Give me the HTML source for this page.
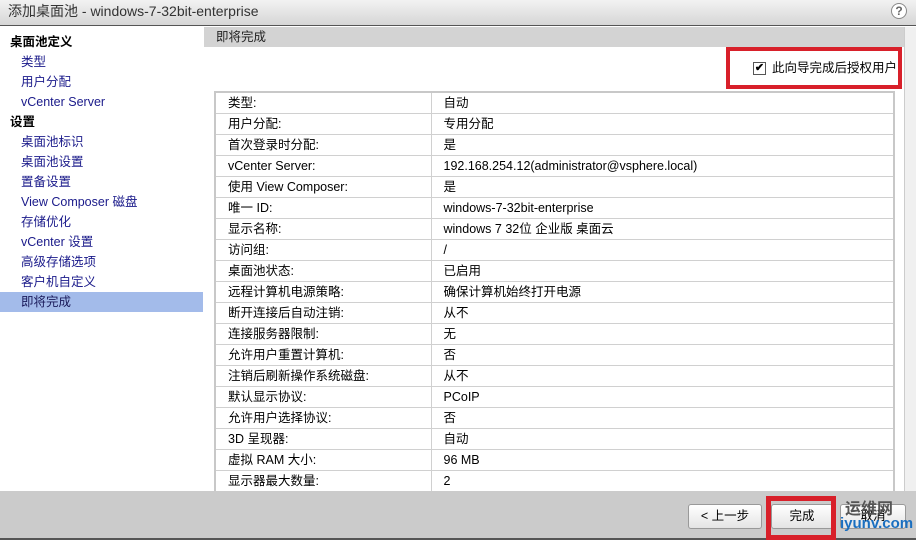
<!DOCTYPE html>
<html><head><meta charset="utf-8"><style>
*{margin:0;padding:0;box-sizing:border-box}
body{width:916px;height:540px;overflow:hidden;background:#fff;font-family:"Liberation Sans","Noto Sans CJK SC",sans-serif;font-size:12.5px;color:#000;position:relative}
.title{position:absolute;left:0;top:0;width:916px;height:26px;background:linear-gradient(#f2f2f2,#d6d6d6);border-bottom:1px solid #555;font-size:14px;line-height:18px;color:#333;padding:2px 0 0 8px}
.help{position:absolute;right:9px;top:3px;width:16px;height:16px;border-radius:50%;border:1px solid #888;background:#fff;font-size:12px;text-align:center;line-height:14px;color:#666;font-weight:bold}
.side{position:absolute;left:0;top:27px;width:204px;height:464px;background:#fff}
.side div{position:absolute;left:21px;color:#1a1a8a;font-size:12.5px;line-height:16px}
.side .h{left:10px;color:#000;font-weight:bold}
.sel{position:absolute;left:0;top:292px;width:203px;height:20px;background:#a3bbea}
.hdr{position:absolute;left:204px;top:27px;width:700px;height:20px;background:#d3d3d3;padding:2px 0 0 12px;color:#222;line-height:16px}
.chk{position:absolute;left:726px;top:47px;width:176px;height:42px;border:4px solid #d8202a;background:#fff}
.box{position:absolute;left:23px;top:11px;width:13px;height:13px;border:1px solid #555;background:#fff;font-size:11px;line-height:11px;text-align:center;font-weight:bold}
.chk span{position:absolute;left:42px;top:9px;font-size:12.5px;line-height:16px}
table{position:absolute;left:214px;top:91px;width:681px;border-collapse:collapse;border:2px solid #c8c8c8;border-bottom:none}
td{height:21px;border-bottom:1px solid #d0d0d0;padding:0 0 0 12px;white-space:nowrap;line-height:16px}
td:first-child{width:216px;border-right:1px solid #d0d0d0}
.sb{position:absolute;left:904px;top:27px;width:12px;height:464px;background:#f0f0f0;border-left:1px solid #ccc}
.bot{position:absolute;left:0;top:491px;width:916px;height:49px;background:#cbcbcb;border-bottom:2px solid #555}
.btn{position:absolute;top:504px;height:25px;border:1px solid #999;border-radius:3px;background:linear-gradient(#fff,#e4e4e4);text-align:center;line-height:23px;font-size:12.5px}
.red{position:absolute;left:766px;top:496px;width:70px;height:44px;border:5px solid #d8202a}
.wm{position:absolute;left:845px;top:495px;font-size:16px;color:#555;font-weight:bold}
.wm2{position:absolute;left:840px;top:515px;font-size:15px;color:#1a6fc0;font-weight:bold}
</style></head><body>
<div class="title">添加桌面池 - windows-7-32bit-enterprise<div class="help">?</div></div>
<div class="side">
<div class="h" style="top:7px">桌面池定义</div>
<div style="top:27px">类型</div>
<div style="top:47px">用户分配</div>
<div style="top:67px">vCenter Server</div>
<div class="h" style="top:87px">设置</div>
<div style="top:107px">桌面池标识</div>
<div style="top:127px">桌面池设置</div>
<div style="top:147px">置备设置</div>
<div style="top:167px">View Composer 磁盘</div>
<div style="top:187px">存储优化</div>
<div style="top:207px">vCenter 设置</div>
<div style="top:227px">高级存储选项</div>
<div style="top:247px">客户机自定义</div>
</div>
<div class="sel"></div>
<div style="position:absolute;left:21px;top:294px;color:#1a1a5a;line-height:16px">即将完成</div>
<div class="hdr">即将完成</div>
<div class="chk"><div class="box">✔</div><span>此向导完成后授权用户</span></div>
<table>
<tr><td>类型:</td><td>自动</td></tr>
<tr><td>用户分配:</td><td>专用分配</td></tr>
<tr><td>首次登录时分配:</td><td>是</td></tr>
<tr><td>vCenter Server:</td><td>192.168.254.12(administrator@vsphere.local)</td></tr>
<tr><td>使用 View Composer:</td><td>是</td></tr>
<tr><td>唯一 ID:</td><td>windows-7-32bit-enterprise</td></tr>
<tr><td>显示名称:</td><td>windows 7 32位 企业版 桌面云</td></tr>
<tr><td>访问组:</td><td>/</td></tr>
<tr><td>桌面池状态:</td><td>已启用</td></tr>
<tr><td>远程计算机电源策略:</td><td>确保计算机始终打开电源</td></tr>
<tr><td>断开连接后自动注销:</td><td>从不</td></tr>
<tr><td>连接服务器限制:</td><td>无</td></tr>
<tr><td>允许用户重置计算机:</td><td>否</td></tr>
<tr><td>注销后刷新操作系统磁盘:</td><td>从不</td></tr>
<tr><td>默认显示协议:</td><td>PCoIP</td></tr>
<tr><td>允许用户选择协议:</td><td>否</td></tr>
<tr><td>3D 呈现器:</td><td>自动</td></tr>
<tr><td>虚拟 RAM 大小:</td><td>96 MB</td></tr>
<tr><td>显示器最大数量:</td><td>2</td></tr>
</table>
<div class="sb"></div>
<div class="bot"></div>
<div class="btn" style="left:688px;width:74px">&lt; 上一步</div>
<div class="btn" style="left:771px;width:62px">完成</div>
<div class="btn" style="left:840px;width:66px">取消</div>
<div class="red"></div>
<div class="wm">运维网</div>
<div class="wm2">iyunv.com</div>
</body></html>
